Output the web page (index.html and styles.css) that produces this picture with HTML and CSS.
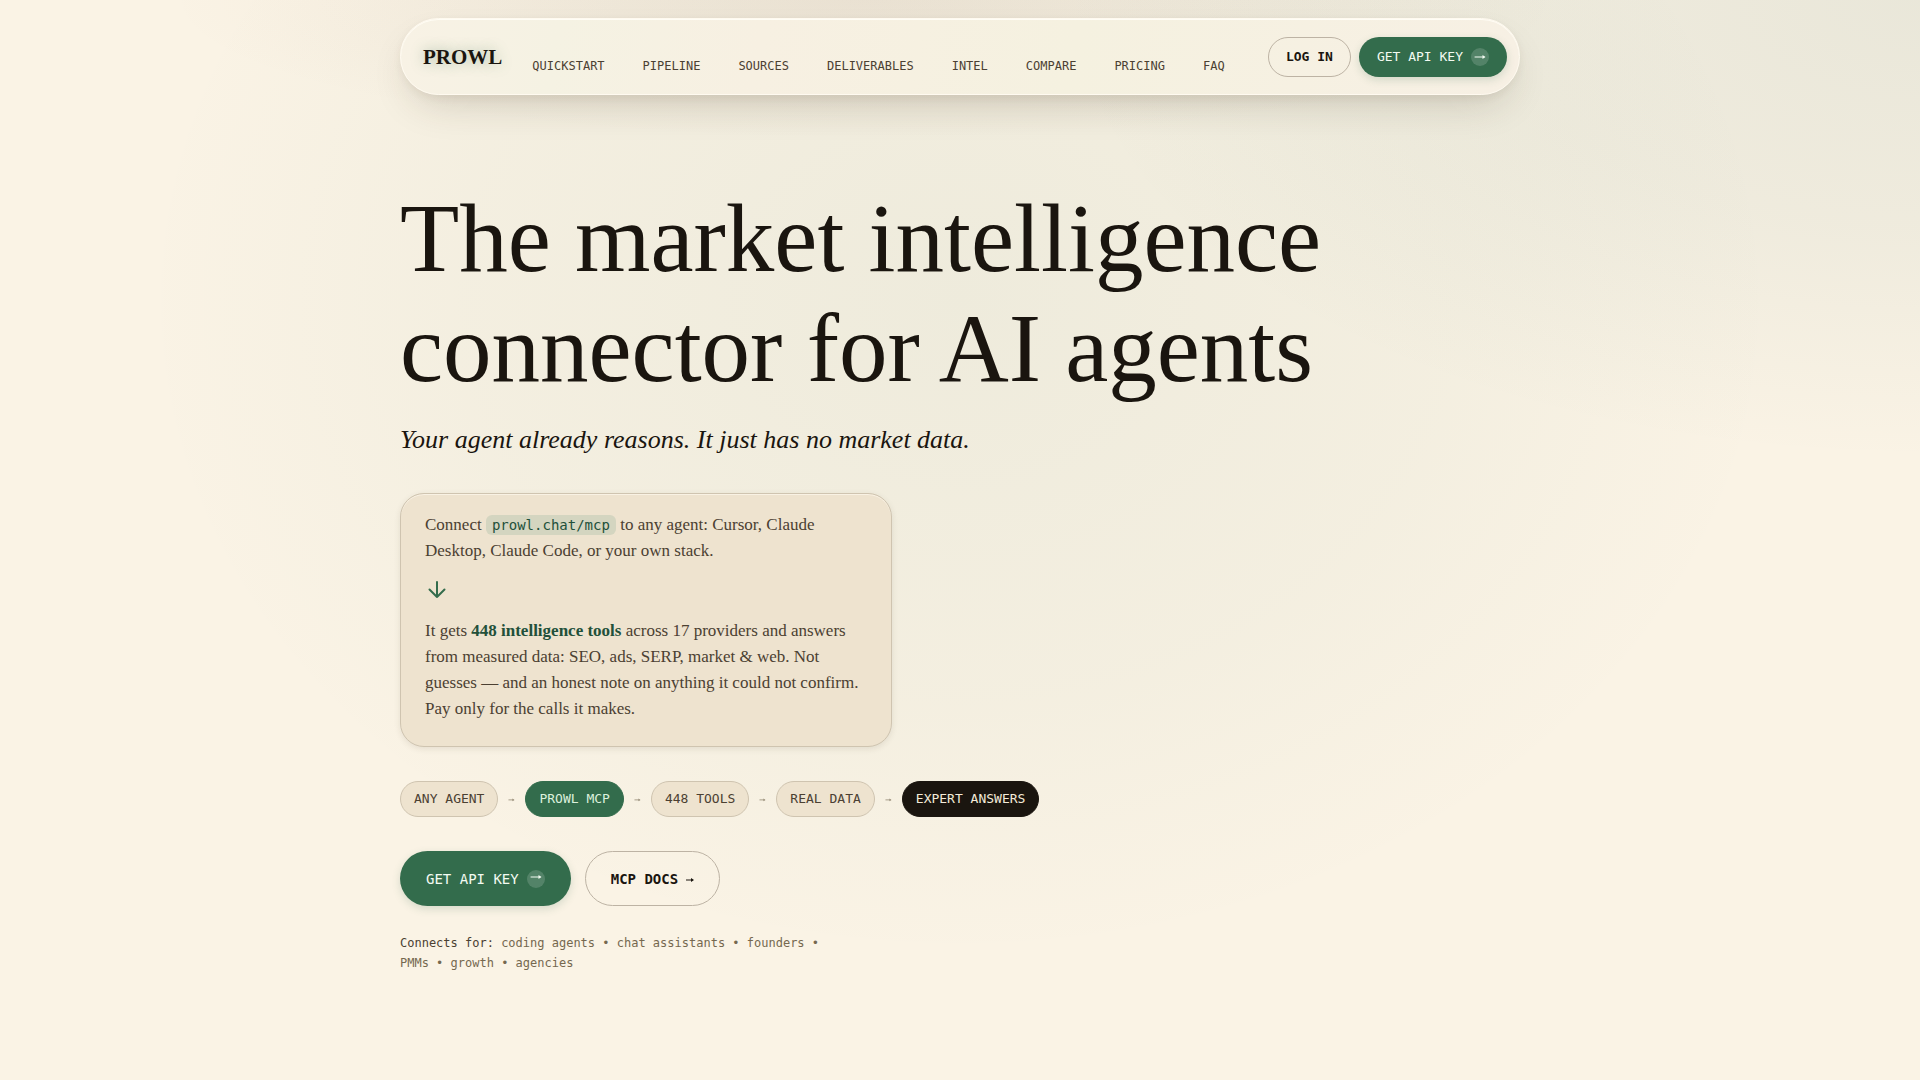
FILE: index.html
```html
<!DOCTYPE html>
<html lang="en">
<head>
<meta charset="utf-8">
<meta name="viewport" content="width=device-width, initial-scale=1">
<title>Prowl</title>
<link rel="stylesheet" href="styles.css">
</head>
<body>
<div class="page">
  <header class="nav">
    <a class="brand" href="#">PROWL</a>
    <nav class="links" aria-label="Main">
      <a href="#quickstart">QUICKSTART</a>
      <a href="#pipeline">PIPELINE</a>
      <a href="#sources">SOURCES</a>
      <a href="#deliverables">DELIVERABLES</a>
      <a href="#intel">INTEL</a>
      <a href="#compare">COMPARE</a>
      <a href="#pricing">PRICING</a>
      <a href="#faq">FAQ</a>
    </nav>
    <div class="actions">
      <button class="btn btn-outline btn-small" type="button">LOG IN</button>
      <button class="btn btn-primary btn-small" type="button">GET API KEY
        <span class="dot"><svg viewBox="0 0 18 18" aria-hidden="true"><path d="M4 9h9"/><path class="head" d="M11.500 7 14.500 9l-3 2z"/></svg></span>
      </button>
    </div>
  </header>

  <main class="hero">
    <h1>The market intelligence<br>connector for AI agents</h1>
    <p class="tagline">Your agent already reasons. It just has no market data.</p>

    <section class="card">
      <p>Connect <code>prowl.chat/mcp</code> to any agent: Cursor, Claude<br>Desktop, Claude Code, or your own stack.</p>
      <svg class="down" viewBox="0 0 24 24" aria-hidden="true"><path d="M12 4v15M4.500 11.500 12 19l7.500-7.500"/></svg>
      <p>It gets <strong>448 intelligence tools</strong> across 17 providers and answers<br>from measured data: SEO, ads, SERP, market &amp; web. Not<br>guesses — and an honest note on anything it could not confirm.<br>Pay only for the calls it makes.</p>
    </section>

    <div class="flow">
      <span class="pill">ANY AGENT</span>
      <svg class="step" viewBox="0 0 8 8" aria-hidden="true"><path d="M1 5h5"/><path class="head" d="M5 3.500 7.500 5 5 6.500z"/></svg>
      <span class="pill pill-green">PROWL MCP</span>
      <svg class="step" viewBox="0 0 8 8" aria-hidden="true"><path d="M1 5h5"/><path class="head" d="M5 3.500 7.500 5 5 6.500z"/></svg>
      <span class="pill">448 TOOLS</span>
      <svg class="step" viewBox="0 0 8 8" aria-hidden="true"><path d="M1 5h5"/><path class="head" d="M5 3.500 7.500 5 5 6.500z"/></svg>
      <span class="pill">REAL DATA</span>
      <svg class="step" viewBox="0 0 8 8" aria-hidden="true"><path d="M1 5h5"/><path class="head" d="M5 3.500 7.500 5 5 6.500z"/></svg>
      <span class="pill pill-dark">EXPERT ANSWERS</span>
    </div>

    <div class="cta">
      <button class="btn btn-primary" type="button">GET API KEY
        <span class="dot"><svg viewBox="0 0 18 18" aria-hidden="true"><path d="M4 7h9"/><path class="head" d="M11.500 5 14.500 7l-3 2z"/></svg></span>
      </button>
      <a class="btn btn-outline" href="#docs">MCP DOCS
        <svg class="step" viewBox="0 0 8 8" aria-hidden="true"><path d="M0 5h6"/><path class="head" d="M5 3 8 5 5 7z"/></svg>
      </a>
    </div>

    <p class="audience"><strong>Connects for:</strong> coding agents • chat assistants • founders •<br>PMMs • growth • agencies</p>
  </main>
</div>
</body>
</html>
```
FILE: styles.css
```css
:root {
  --ink: #1a150f;
  --text: #4b4032;
  --muted: #75684f;
  --green: #336c4c;
  --green-deep: #22503a;
  --sand: #eee3cf;
  --line: #cfc4b0;
  --serif: "Liberation Serif", serif;
  --mono: "DejaVu Sans Mono", monospace;
}

* {
  box-sizing: border-box;
}

body {
  margin: 0;
  min-height: 100vh;
  color: var(--ink);
  font-family: var(--serif);
  background:
    radial-gradient(ellipse 820px 660px at 50% 300px, rgba(51, 108, 76, 0.06), rgba(51, 108, 76, 0.03) 60%, transparent),
    radial-gradient(ellipse 860px 460px at 100% 0, rgba(40, 90, 80, 0.08), rgba(40, 90, 80, 0.05) 50%, transparent),
    radial-gradient(ellipse 700px 140px at 45% 0, rgba(130, 70, 50, 0.08), transparent),
    #faf3e5;
}

p,
h1 {
  margin: 0;
}

.page {
  max-width: 1120px;
  margin: 0 auto;
  padding: 18px 0 80px;
}

/* Navigation bar */
.nav {
  display: flex;
  align-items: center;
  height: 77px;
  padding: 0 12px 0 22px;
  border: 1px solid #fffaf0;
  border-radius: 39px;
  background: linear-gradient(100deg, #f8f2e5, #f5f2e3 14%, #f7f0e2 32%, #f5f1e0 60%, #f7f0e4);
  box-shadow:
    inset 0 1px 0 #fffdf5,
    0 18px 40px -12px rgba(60, 45, 25, 0.2),
    0 3px 8px rgba(60, 45, 25, 0.06);
}

.brand {
  color: var(--ink);
  font-size: 21px;
  font-weight: 700;
  line-height: 26px;
  text-decoration: none;
  text-shadow: 0 0 14px rgba(51, 108, 76, 0.4);
}

.links {
  display: flex;
  gap: 38px;
  margin-left: 30px;
  padding-top: 18px;
}

.links a {
  color: var(--text);
  font: 12px/18px var(--mono);
  text-decoration: none;
}

.actions {
  display: flex;
  gap: 8px;
  margin-left: auto;
}

/* Buttons */
.btn {
  display: inline-flex;
  align-items: center;
  justify-content: center;
  gap: 8px;
  height: 55px;
  padding: 0 25px;
  border: 1px solid transparent;
  border-radius: 28px;
  font: 14px/20px var(--mono);
  text-decoration: none;
  white-space: nowrap;
}

.btn-small {
  height: 40px;
  padding: 0 17px;
  border-radius: 20px;
  font-size: 13px;
}

.btn-primary {
  background: var(--green);
  color: #f3fbf2;
  box-shadow: 0 3px 8px rgba(51, 108, 76, 0.18);
}

.btn-outline {
  border-color: #bdb3a4;
  background: transparent;
  color: var(--ink);
  font-weight: 700;
}

.dot {
  display: flex;
  width: 18px;
  height: 18px;
  border-radius: 50%;
  background: rgba(255, 255, 255, 0.16);
}

svg {
  fill: none;
  stroke: currentColor;
  stroke-linecap: round;
  stroke-linejoin: round;
}

.head {
  fill: currentColor;
  stroke: none;
}

/* Hero */
.hero {
  display: flex;
  flex-direction: column;
  align-items: flex-start;
  padding-top: 89px;
}

h1 {
  font-size: 97px;
  font-weight: 400;
  line-height: 110px;
  white-space: nowrap;
}

.tagline {
  margin-top: 18px;
  font-size: 26px;
  font-style: italic;
  line-height: 36px;
}

.card {
  width: 492px;
  max-width: 100%;
  margin-top: 35px;
  padding: 18px 24px 24px;
  border: 1px solid var(--line);
  border-radius: 24px;
  background: var(--sand);
  box-shadow:
    inset 0 1px 0 #f9f2e4,
    0 2px 6px rgba(60, 45, 25, 0.1);
}

.card p {
  color: var(--text);
  font-size: 17px;
  line-height: 26px;
  white-space: nowrap;
}

.card code {
  padding: 2px 6px;
  border-radius: 6px;
  background: #d4d5c0;
  color: var(--green-deep);
  font: 14px/18px var(--mono);
}

.card strong {
  color: var(--green-deep);
}

.down {
  display: block;
  width: 24px;
  height: 24px;
  margin: 14px 0 16px;
  color: var(--green);
  stroke-width: 2;
}

.flow {
  display: flex;
  align-items: center;
  gap: 10px;
  margin-top: 34px;
}

.pill {
  padding: 8px 13px;
  border: 1px solid var(--line);
  border-radius: 18px;
  background: var(--sand);
  color: var(--text);
  font: 13px/18px var(--mono);
  white-space: nowrap;
}

.pill-green {
  border-color: var(--green);
  background: var(--green);
  color: #dcf0dc;
}

.pill-dark {
  border-color: var(--ink);
  background: var(--ink);
  color: #f3ead8;
}

.step {
  width: 8px;
  height: 8px;
  color: inherit;
}

.flow .step {
  width: 7px;
  color: #9c917d;
}

.cta {
  display: flex;
  gap: 14px;
  margin-top: 34px;
}

.audience {
  margin-top: 27px;
  color: var(--muted);
  font: 12px/20px var(--mono);
}

.audience strong {
  color: var(--text);
  font-weight: 400;
}
```
